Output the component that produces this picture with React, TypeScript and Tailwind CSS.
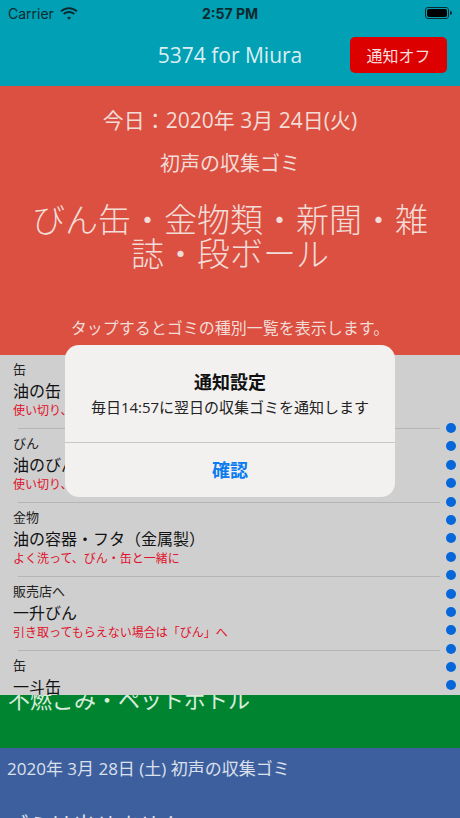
import React from 'react';

const items = [
  { category: '缶', name: '油の缶', note: '使い切り、よく洗って缶へ' },
  { category: 'びん', name: '油のびん', note: '使い切り、よく洗ってびんへ' },
  { category: '金物', name: '油の容器・フタ（金属製）', note: 'よく洗って、びん・缶と一緒に' },
  { category: '販売店へ', name: '一升びん', note: '引き取ってもらえない場合は「びん」へ' },
  { category: '缶', name: '一斗缶', note: '' },
];

const dots = Array.from({ length: 15 }, (_, i) => i);

const StatusBar: React.FC = () => (
  <div className="flex h-[26px] items-center justify-between px-[8px] font-['Inter',sans-serif] text-[#0b2a30]">
    <div className="flex w-[120px] items-center gap-[6px] text-[14px]">
      <span>Carrier</span>
      <svg width="18" height="13" viewBox="0 0 18 13" fill="#0b2a30">
        <path d="M9 2.2c2.8 0 5.4 1.1 7.3 2.9l1.3-1.4C15.4 1.6 12.3.3 9 .3S2.6 1.6.4 3.7l1.3 1.4C3.6 3.3 6.2 2.2 9 2.2z" />
        <path d="M9 6c1.8 0 3.4.7 4.6 1.8l1.3-1.4C13.3 5 11.2 4.1 9 4.1S4.7 5 3.1 6.4l1.3 1.4C5.6 6.7 7.2 6 9 6z" />
        <path d="M9 9.8c.8 0 1.5.3 2 .8L9 12.8 7 10.6c.5-.5 1.2-.8 2-.8z" />
      </svg>
    </div>
    <span className="text-[14px] font-bold">2:57 PM</span>
    <div className="flex w-[120px] justify-end">
      <div className="flex items-center">
        <div className="h-[12px] w-[24px] rounded-[3px] border border-[#0b2a30] p-[1px]">
          <div className="h-full w-full rounded-[2px] bg-black" />
        </div>
        <div className="ml-[1px] h-[4px] w-[1.5px] rounded-r bg-[#0b2a30]" />
      </div>
    </div>
  </div>
);

export default function App() {
  return (
    <div className="relative flex h-[818px] w-[460px] flex-col overflow-hidden bg-white font-['Open_Sans','Noto_Sans_CJK_JP',sans-serif]">
      {/* ヘッダー */}
      <header className="h-[86px] shrink-0 bg-[#01a0b5]">
        <StatusBar />
        <div className="relative flex h-[60px] items-center justify-center">
          <span className="text-[21px] text-[#d9eef1]">5374 for Miura</span>
          <button className="absolute right-[13px] top-[11px] h-[36px] w-[97px] rounded-[5px] bg-[#dd0000] font-['Noto_Sans_CJK_JP',sans-serif] text-[16px] text-[#f6dede]">
            通知オフ
          </button>
        </div>
      </header>

      {/* 今日の収集ゴミ */}
      <section className="flex h-[269px] shrink-0 flex-col items-center bg-[#dc5041] px-[20px] text-[#f2dcd7]">
        <div className="mt-[20px] text-[21px] leading-[28px]">今日：2020年 3月 24日(火)</div>
        <div className="mt-[16px] text-[20px] leading-[28px]">初声の収集ゴミ</div>
        <div className="mt-[25px] text-center text-[33px] font-light leading-[34px]">びん缶・金物類・新聞・雑誌・段ボール</div>
        <div className="mt-[45px] text-[16px] leading-[24px]">タップするとゴミの種別一覧を表示します。</div>
      </section>

      {/* ゴミの種別一覧 */}
      <div className="relative z-10 h-[340px] shrink-0 overflow-hidden bg-[#cfcfcf]">
        {items.map((item, i) => (
          <div key={i} className="pl-[13px]">
            <div className="pt-[6px] text-[13px] leading-[16px] text-[#222]">{item.category}</div>
            <div className="mt-[2px] text-[16px] leading-[24px] text-[#111]">{item.name}</div>
            <div className="text-[12px] leading-[16px] text-[#e0102a]">{item.note}</div>
            <div className="ml-[5px] mr-[20px] mt-[9px] border-b border-[#b5b5b5]" />
          </div>
        ))}
        <div className="absolute right-[4px] top-[68px] flex flex-col gap-[8.4px]">
          {dots.map((d) => (
            <div key={d} className="h-[10px] w-[10px] rounded-full bg-[#0567d9]" />
          ))}
        </div>
      </div>

      {/* 次の収集日 */}
      <section className="h-[53px] shrink-0 bg-[#008430] px-[8px]">
        <div className="-mt-[11px] text-[22px] leading-[30px] text-[#d8ecdc]">不燃ごみ・ペットボトル</div>
      </section>
      <section className="min-h-0 flex-1 overflow-hidden bg-[#3e5f9e] px-[7px] text-[#dbe1ec]">
        <div className="mt-[9px] text-[17px] leading-[24px]">2020年 3月 28日 (土) 初声の収集ゴミ</div>
        <div className="mt-[28px] text-[22px] leading-[30px]">ゴミは出せません</div>
      </section>

      {/* 通知設定アラート */}
      <div className="absolute left-[65px] top-[345px] z-20 w-[330px] overflow-hidden rounded-[14px] bg-[#f3f1f0]">
        <div className="flex flex-col items-center px-[16px] pb-[24px] pt-[25px]">
          <div className="text-[18px] font-bold leading-[24px] text-[#111]">通知設定</div>
          <div className="mt-[2px] text-[15px] leading-[22px] text-[#222]">毎日14:57に翌日の収集ゴミを通知します</div>
        </div>
        <div className="border-t border-[#c9c7c6]" />
        <button className="flex h-[54px] w-full items-center justify-center text-[18px] font-bold text-[#0a7cf0]">
          確認
        </button>
      </div>
    </div>
  );
}
